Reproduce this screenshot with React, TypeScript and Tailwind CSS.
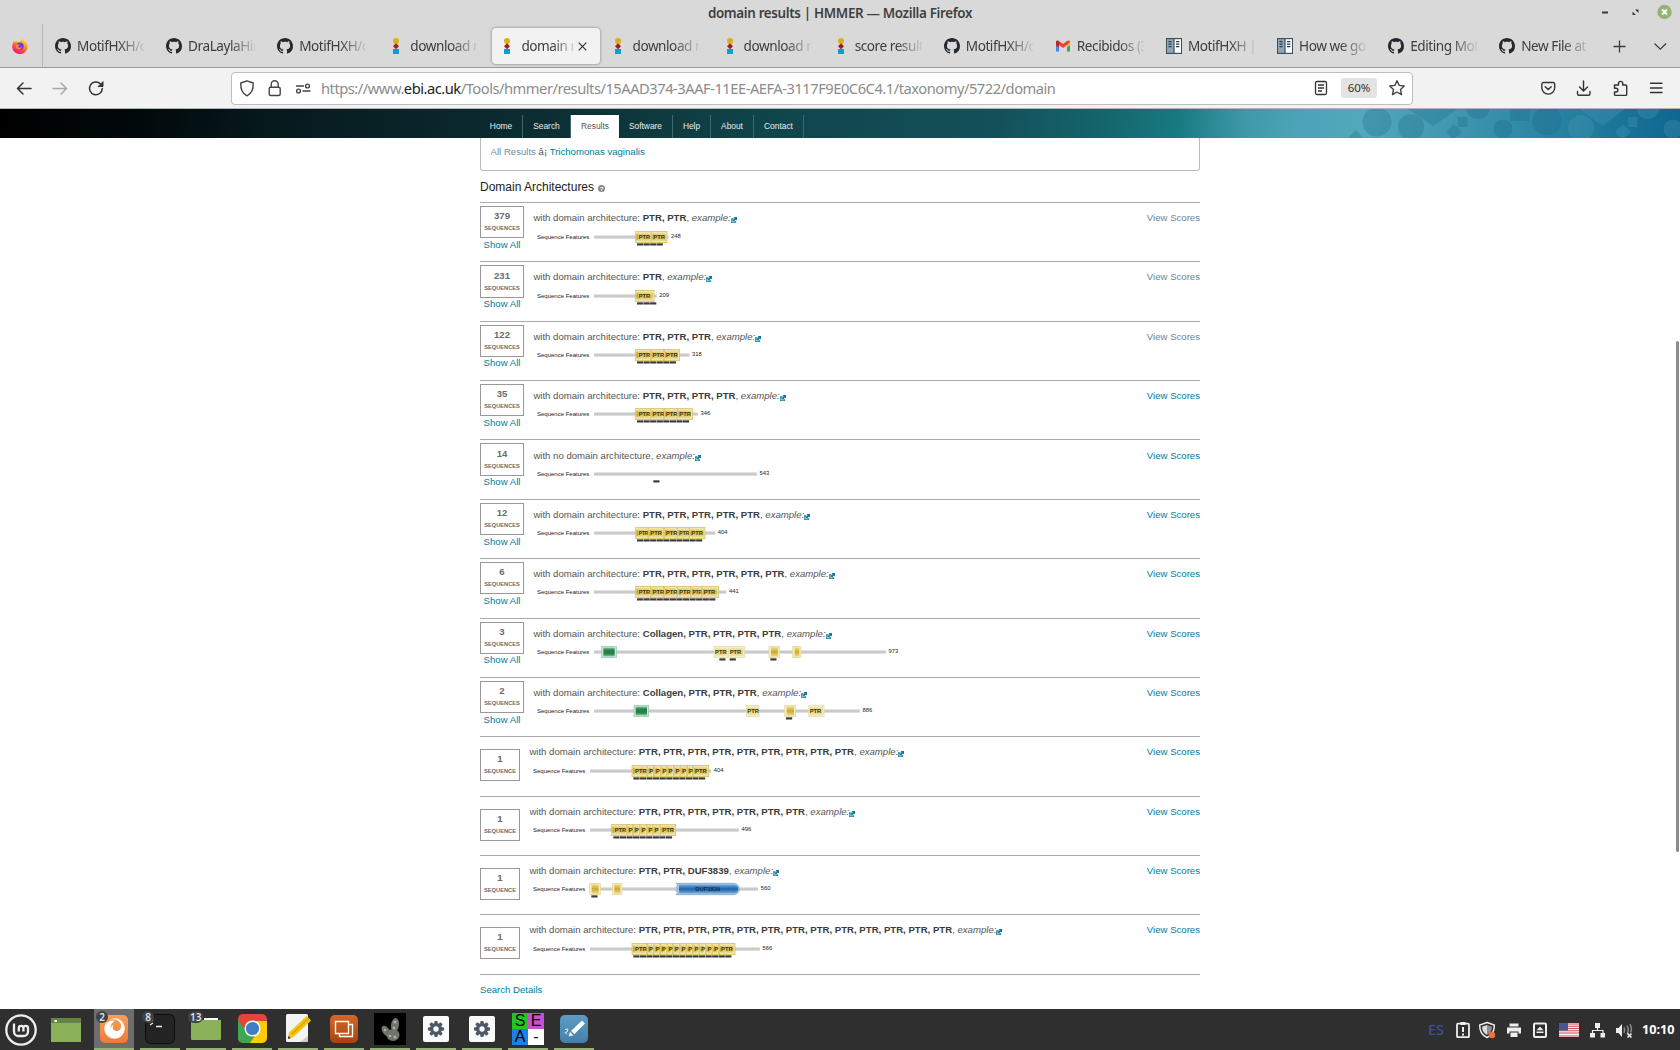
import React from "react";
import { FaFirefox } from "react-icons/fa";

const UI = "font-['Noto_Sans',sans-serif]";

/* ---------- favicons ---------- */
const GithubIcon = () => (
  <svg viewBox="0 0 16 16" className="size-4 shrink-0" fill="#24292f">
    <path d="M8 0C3.58 0 0 3.58 0 8c0 3.54 2.29 6.53 5.47 7.59.4.07.55-.17.55-.38 0-.19-.01-.82-.01-1.49-2.01.37-2.53-.49-2.69-.94-.09-.23-.48-.94-.82-1.13-.28-.15-.68-.52-.01-.53.63-.01 1.08.58 1.23.82.72 1.21 1.87.87 2.33.66.07-.52.28-.87.51-1.07-1.78-.2-3.64-.89-3.64-3.95 0-.87.31-1.59.82-2.15-.08-.2-.36-1.02.08-2.12 0 0 .67-.21 2.2.82.64-.18 1.32-.27 2-.27.68 0 1.36.09 2 .27 1.53-1.04 2.2-.82 2.2-.82.44 1.1.16 1.92.08 2.12.51.56.82 1.27.82 2.15 0 3.07-1.87 3.75-3.65 3.95.29.25.54.73.54 1.48 0 1.07-.01 1.93-.01 2.2 0 .21.15.46.55.38A8.013 8.013 0 0016 8c0-4.42-3.58-8-8-8z" />
  </svg>
);
const HmmerIcon = () => (
  <svg viewBox="0 0 16 16" className="size-4 shrink-0">
    <circle cx="8" cy="3" r="3" fill="#d2b414" />
    <path d="M8 5.2 11 8.2 8 11.2 5 8.2z" fill="#a51c1c" />
    <rect x="5" y="11" width="6" height="5" fill="#0f9dcb" />
  </svg>
);
const GmailIcon = () => (
  <svg viewBox="0 0 16 16" className="size-4 shrink-0">
    <path d="M1 4v9.5h3V6z" fill="#4285f4" />
    <path d="M15 4v9.5h-3V6z" fill="#34a853" />
    <path d="M12 3.5 15 3v4.2l-3 2.1z" fill="#fbbc04" />
    <path d="M1 7.2V4.1C1 2.4 2.8 2 4 3l4 3.1L12 3c1.3-1 3-.5 3 1.1L12 7 8 10 4 7v2.3z" fill="#ea4335" />
    <path d="M1 7.2V4.1C1 3 2 2.5 3 2.7L4 4v5.3z" fill="#c5221f" />
  </svg>
);
const BookIcon = () => (
  <svg viewBox="0 0 16 16" className="size-4 shrink-0">
    <rect width="16" height="16" fill="#3e4f5c" />
    <rect x="1" y="1.2" width="6.4" height="13.6" fill="#8ea6b8" />
    <rect x="8.6" y="1.2" width="6.4" height="13.6" fill="#fff" />
    <path d="M2.500 3.700h3M2.500 6.200h3M2.500 8.700h3M10 3.700h3.400M10 6.200h3.400M10 8.700h3.400" stroke="#2b3b47" strokeWidth="1.2" />
  </svg>
);
const FirefoxIcon = () => (
  <svg viewBox="0 0 16 16" className="size-4">
    <defs>
      <linearGradient id="fx" x1="0.8" y1="0" x2="0.3" y2="1">
        <stop offset="0" stopColor="#fff04a" />
        <stop offset=".4" stopColor="#ff9a22" />
        <stop offset=".75" stopColor="#ff3b48" />
        <stop offset="1" stopColor="#e21a7e" />
      </linearGradient>
    </defs>
    <path d="M10 0c.6 1.5 2 2.3 3 3.3.4.5.7 1 .8 1.4.2 0 .5-.2.5-.5 1 1.400 1.500 3 1.500 4.300A7.800 7.500 0 0 1 .2 8.700C.2 6.500.9 4.500 2.300 2.800l.5 1.600L4.300 3l1 1.600C7 4 9 3.500 10 0z" fill="url(#fx)" />
    <circle cx="8" cy="8.300" r="3.700" fill="#6a3fdc" />
    <path d="M4 6.500c1.500-.8 2.500.3 4 .2-.5 1.300-1.600 1-1.900 2 .3 1 2.300 1.400 3.800.3-.5 2-2.400 3-4 2.400C4 10.700 3.400 8.500 4 6.500z" fill="#ff8a2a" />
  </svg>
);

const icons = { gh: GithubIcon, hm: HmmerIcon, gm: GmailIcon, bk: BookIcon };
const tabs: { icon: keyof typeof icons; text: string; active?: boolean }[] = [
  { icon: "gh", text: "MotifHXH/c" },
  { icon: "gh", text: "DraLaylaHir" },
  { icon: "gh", text: "MotifHXH/c" },
  { icon: "hm", text: "download r" },
  { icon: "hm", text: "domain r", active: true },
  { icon: "hm", text: "download r" },
  { icon: "hm", text: "download r" },
  { icon: "hm", text: "score result" },
  { icon: "gh", text: "MotifHXH/c" },
  { icon: "gm", text: "Recibidos (3" },
  { icon: "bk", text: "MotifHXH |" },
  { icon: "bk", text: "How we got" },
  { icon: "gh", text: "Editing Mot" },
  { icon: "gh", text: "New File at" },
];

function TitleBar() {
  return (
    <div className="relative flex h-6 items-center justify-center bg-[#d9d9d9]">
      <div className="pt-[2px] text-[13.4px] font-semibold leading-6 tracking-[-0.34px] text-[#3f3f3f]">domain results | HMMER — Mozilla Firefox</div>
      <svg className="absolute right-0 top-0" width="90" height="24">
        <path d="M12 12.500h6" stroke="#3a3a3a" strokeWidth="2" />
        <path d="M45 9.500h3.500V13zM42.500 11.500V15H46z" fill="#3a3a3a" />
        <circle cx="74.500" cy="12" r="7.200" fill="#92b372" />
        <path d="M72 9.500l5 5M77 9.500l-5 5" stroke="#fff" strokeWidth="2" />
      </svg>
    </div>
  );
}

function TabStrip() {
  return (
    <div className="flex h-[44px] border-b border-[#9a9a9a] bg-[#d9d9d9]">
      <div className="flex w-[43px] shrink-0 items-center border-r border-[#b4b4b4] pl-3 pt-px">
        <FirefoxIcon />
      </div>
      <div className="flex w-[1560px] shrink-0 pl-[4px]">
        {tabs.map((t, i) => {
          const Icon = icons[t.icon];
          return (
            <div key={i} className="flex w-[111.1px] shrink-0 items-start pl-[1px] pr-[2px] pt-[4px]">
              <div
                className={
                  t.active
                    ? "flex h-[36px] w-full items-center rounded bg-[#f2f2f2] pl-[7px] shadow-[0_0_3px_rgba(0,0,0,0.45)]"
                    : "flex h-[36px] w-full items-center pl-[7px]"
                }
              >
                <Icon />
                <div
                  className={
                    t.active
                      ? "ml-[6px] w-[52px] whitespace-nowrap text-[13.6px] leading-5 tracking-[-0.45px] text-[#3d3d3d] [mask-image:linear-gradient(to_right,#000_60%,transparent_110%)]"
                      : "ml-[6px] w-[67px] whitespace-nowrap text-[13.6px] leading-5 tracking-[-0.45px] text-[#3d3d3d] [mask-image:linear-gradient(to_right,#000_62%,transparent_104%)]"
                  }
                >
                  {t.text}
                </div>
                {t.active && (
                  <svg width="9" height="9" viewBox="0 0 9 9" className="ml-[5px]">
                    <path d="M.7.7l7.600 7.600M8.300.7L.7 8.300" stroke="#333" strokeWidth="1.200" />
                  </svg>
                )}
              </div>
            </div>
          );
        })}
      </div>
      <svg width="77" height="43" viewBox="1603 24 77 43" fill="none" stroke="#3d3d3d" strokeWidth="1.300">
        <path d="M1613.500 46.500h12M1619.500 40.500v12M1654.500 43.500l5.800 5.600 5.800-5.600" />
      </svg>
    </div>
  );
}

function NavBar() {
  return (
    <div className="flex h-[41px] items-center border-b border-[#b5b5b5] bg-[#f2f2f2]">
      <svg width="231" height="40" viewBox="0 68 231 40" fill="none" stroke="#333" strokeWidth="1.500" strokeLinecap="round" strokeLinejoin="round" className="shrink-0">
        <path d="M31 88.500H17.500M23 83l-5.500 5.500L23 94" />
        <path d="M53 88.500h13.500M61 83l5.500 5.500L61 94" stroke="#a8a8a8" />
        <path d="M102.300 88.500a6.400 6.400 0 1 1-1.900-4.700" />
        <path d="M103 82v4.500h-4.500z" fill="#333" strokeWidth="1" />
      </svg>
      <div className="flex h-[33px] w-[1182px] shrink-0 items-center rounded border border-[#bdbdbd] bg-white">
        <svg width="89" height="30" viewBox="232 73 89 30" fill="none" stroke="#444" strokeWidth="1.400" strokeLinejoin="round" strokeLinecap="round" className="shrink-0">
          <path d="M247 80.800l6.200 2.200c.3 5.500-1.500 10.500-6.200 12.800-4.700-2.300-6.500-7.300-6.200-12.800z" />
          <rect x="269.200" y="87.300" width="11" height="8.200" rx="1.500" />
          <path d="M271.200 87v-2.800a3.500 3.500 0 0 1 7 0V87" />
          <path d="M296.500 86h7M303 91h7" />
          <circle cx="307.500" cy="86" r="1.900" />
          <circle cx="298.500" cy="91" r="1.900" />
        </svg>
        <div className="w-[993px] shrink-0 whitespace-nowrap text-[14.700px] leading-6 tracking-[-0.48px] text-[#8c8c8c]">
          https://www.<span className="text-[#222]">ebi.ac.uk</span>/Tools/hmmer/results/15AAD374-3AAF-11EE-AEFA-3117F9E0C6C4.1/taxonomy/5722/domain
        </div>
        <svg width="14" height="16" viewBox="0 0 14 16" fill="none" stroke="#333" strokeWidth="1.300" className="shrink-0">
          <rect x="1.500" y="1.500" width="11" height="13" rx="1.500" />
          <path d="M4 5h6M4 8h6M4 11h4" />
        </svg>
        <div className="ml-[13px] flex h-[20px] w-[36px] items-center justify-center rounded-[3px] bg-[#e3e3e3] text-[11.500px] text-[#333]">60%</div>
        <svg width="18" height="18" viewBox="0 0 18 18" fill="none" stroke="#444" strokeWidth="1.400" strokeLinejoin="round" className="ml-[11px]">
          <path d="M9 1.700l2.200 4.700 5.100.6-3.800 3.500 1 5.100L9 13l-4.500 2.600 1-5.100L1.700 7l5.100-.6z" />
        </svg>
      </div>
      <svg width="267" height="40" viewBox="1413 68 267 40" fill="none" stroke="#333" strokeWidth="1.400" strokeLinejoin="round" strokeLinecap="round">
        <path d="M1543.500 82.500h9.500a1.700 1.700 0 0 1 1.700 1.700v3.500a6.400 6.400 0 0 1-12.900 0v-3.500a1.700 1.700 0 0 1 1.700-1.700zM1545.200 86.700l3 2.800 3-2.800" />
        <path d="M1583.500 81v9.500M1579.500 87l4 4 4-4M1577.500 91.500v2.200a1.500 1.500 0 0 0 1.500 1.500h9.500a1.500 1.500 0 0 0 1.500-1.500v-2.200" />
        <path d="M1614.500 85h4v-1.500a2.100 2.100 0 0 1 4.200 0V85h3a1 1 0 0 1 1 1v8.400a1 1 0 0 1-1 1h-10.200a1 1 0 0 1-1-1V92h1.500a1.900 1.900 0 0 0 0-3.800h-1.500z" />
        <path d="M1650.500 83.300h11.500M1650.500 88h11.500M1650.500 92.500h11.500" />
      </svg>
    </div>
  );
}

/* ---------- site header ---------- */
const navItems = [
  { t: "Home", w: "w-[43px]" },
  { t: "Search", w: "w-[48px]" },
  { t: "Results", w: "w-[48px]", active: true },
  { t: "Software", w: "w-[54px]" },
  { t: "Help", w: "w-[38px]" },
  { t: "About", w: "w-[43px]" },
  { t: "Contact", w: "w-[50px]" },
];

function SiteHeader() {
  return (
    <div className="relative h-[29px] bg-[linear-gradient(97deg,#000_0%,#020a0c_9%,#06191d_16%,#0c2d32_32%,#10444a_45%,#135059_59%,#15666d_66%,#177a80_70%,#3d98a8_74%,#4ca3b7_77%,#52a8bb_81%,#4198b0_86%,#2681a1_93%,#0d6690_100%)]">
      <svg className="absolute right-0 top-0" width="340" height="29" viewBox="1340 109 340 29" fill="#1b6283" fillOpacity=".27">
        <circle cx="1377" cy="122" r="14.500" />
        <circle cx="1411" cy="127" r="13" />
        <path d="M1408 109h50l-25 17zM1446 132l8-8 8 8-7 6h-3zM1348 138l8-8 7 8z" />
        <rect x="1458" y="117" width="9.500" height="10" />
        <circle cx="1478" cy="107" r="12" />
        <rect x="1510" y="107" width="19" height="14" />
        <circle cx="1503" cy="129" r="9.500" />
        <circle cx="1547" cy="121" r="14.500" />
      </svg>
      <svg className="absolute right-0 top-0" width="140" height="29" viewBox="1540 109 140 29" fill="#4b9ab4" fillOpacity=".3">
        <circle cx="1581" cy="128" r="13" />
        <path d="M1580 109h45l-23 17zM1615 132l8-8 8 8-7 6h-3z" />
        <rect x="1628" y="117" width="9.500" height="10" />
        <circle cx="1648" cy="107" r="12" />
        <circle cx="1673" cy="129" r="9.500" />
      </svg>
      <div className="relative flex h-full pl-[480px] pt-[6px] text-[8.400px] leading-[22px]">
        {navItems.map((n) =>
          n.active ? (
            <div key={n.t} className={`${n.w} h-[23px] bg-white text-center text-[#555]`}>{n.t}</div>
          ) : (
            <div key={n.t} className={`${n.w} h-[23px] border-r border-[#41686d] text-center text-[#e8eeee]`}>{n.t}</div>
          ),
        )}
      </div>
    </div>
  );
}

/* ---------- domain graphics; coordinates are thirds of a pixel from the start of the sequence bar ---------- */
type Kind = "ptr" | "lite" | "gold" | "green" | "blue";
type Dom = [start: number, end: number, kind: Kind, label?: string];
type Row = {
  n: number;
  arch: string;
  len: number;
  doms: Dom[];
  dashes: [start: number, count: number][];
  h: string;
  visited?: boolean;
  /* vertical rounding of the scaled page, in whole pixels */
  gfx?: string;
  box?: string;
  num?: string;
  title?: string;
  all?: string;
};

/* a repeat narrower than its label only has room for the first letter */
const ptrs = (...bounds: number[]): Dom[] =>
  bounds.slice(0, -1).map((b, i) => [b, bounds[i + 1], "ptr", bounds[i + 1] - b < 25 ? "P" : "PTR"] as Dom);
const rep = (n: number) => Array(n).fill("PTR").join(", ");

const LOW = "pt-[4px]";
const TALL = "h-[33px]";

const rows: Row[] = [
  { n: 379, arch: rep(2), len: 248, doms: ptrs(124, 172, 220), dashes: [[129, 4]], h: "h-[59px]", visited: true, gfx: LOW },
  { n: 231, arch: rep(1), len: 209, doms: ptrs(124, 181), dashes: [[129, 3]], h: "h-[60px]", visited: true, gfx: LOW, box: TALL, num: "pt-[4px]", all: "-mt-px" },
  { n: 122, arch: rep(3), len: 318, doms: ptrs(124, 170, 210, 257), dashes: [[129, 6]], h: "h-[59px]", visited: true, all: "-mt-px" },
  { n: 35, arch: rep(4), len: 346, doms: ptrs(124, 170, 210, 250, 296), dashes: [[129, 8]], h: "h-[59px]" },
  { n: 14, arch: "", len: 543, doms: [], dashes: [[178, 1]], h: "h-[60px]", gfx: LOW, box: TALL, num: "pt-[4px]", title: "pt-[9px]", all: "-mt-px" },
  { n: 12, arch: rep(5), len: 404, doms: ptrs(124, 163, 210, 250, 286, 334), dashes: [[129, 10]], h: "h-[59px]" },
  { n: 6, arch: rep(6), len: 441, doms: ptrs(124, 170, 210, 250, 290, 323, 375), dashes: [[129, 12]], h: "h-[60px]" },
  { n: 3, arch: "Collagen, " + rep(4), len: 973, doms: [[22, 68, "green"], [359, 403, "lite", "PTR"], [403, 453, "lite", "PTR"], [524, 558, "gold"], [595, 622, "gold"]], dashes: [[376, 1], [407, 1], [529, 1]], h: "h-[59px]", all: "-mt-px" },
  { n: 2, arch: "Collagen, " + rep(3), len: 886, doms: [[119, 165, "green"], [456, 496, "lite", "PTR"], [571, 606, "gold"], [643, 691, "lite", "PTR"]], dashes: [[576, 1]], h: "h-[59px]" },
  { n: 1, arch: rep(9), len: 404, doms: ptrs(125, 172, 192, 212, 230, 251, 271, 291, 309, 357), dashes: [[130, 11]], h: "h-[60px]", gfx: LOW },
  { n: 1, arch: rep(7), len: 496, doms: ptrs(64, 110, 129, 149, 170, 188, 211, 258), dashes: [[70, 9]], h: "h-[59px]" },
  { n: 1, arch: "PTR, PTR, DUF3839", len: 560, doms: [[-2, 32, "gold"], [66, 97, "gold"], [258, 449, "blue", "DUF3839"]], dashes: [[4, 1]], h: "h-[59px]" },
  { n: 1, arch: rep(13), len: 566, doms: ptrs(125, 171, 191, 210, 230, 249, 269, 289, 308, 328, 347, 367, 387, 436), dashes: [[130, 15]], h: "h-[60px]", gfx: LOW },
];

function Domain({ d, first }: { d: Dom; first: boolean }) {
  const [a, b, kind, label] = d;
  const w = b - a;
  if (kind === "blue")
    return (
      <g>
        <path d={`M${a} 1H${b - 17}a16 17 0 0 1 0 34H${a}l5 -6l-5 -6l5 -5l-5 -6l5 -6z`} fill="#a3c6e6" stroke="#6d9cc8" strokeWidth="2" />
        <path d={`M${a + 9} 5H${b - 17}a13 13 0 0 1 0 26H${a + 9}z`} fill="url(#gBlue)" />
        <text x={(a + b) / 2} y="24.500" fontSize="17.500" fontWeight="bold" textAnchor="middle" fill="#16304f">{label}</text>
      </g>
    );
  if (kind === "green")
    return (
      <g>
        <rect x={a + 1} y="1" width={w - 2} height="34" fill="#cde8d6" stroke="#8cc5a2" strokeWidth="2" />
        <rect x={a + 6} y="5" width={w - 12} height="26" fill="url(#gGreen)" />
      </g>
    );
  if (kind === "gold")
    return (
      <g>
        <rect x={a + 1} y="1" width={w - 2} height="34" fill="#f6edc3" stroke="#e6d68e" strokeWidth="2" />
        <rect x={a + 7} y="4" width={w - 13} height="28" fill="url(#gGold)" />
      </g>
    );
  const lite = kind === "lite";
  const start = a + (lite ? 4 : first ? 10 : 6);
  return (
    <g>
      <rect x={a + 1} y="1" width={w - 2} height="34" fill={lite ? "#f6efcd" : "#f1e6b4"} stroke={lite ? "#e6d99c" : "#d4bb4d"} strokeWidth="2" />
      <rect x={a + 4} y="5" width={w - 9} height="26" fill={lite ? "url(#gLite)" : "url(#gPtr)"} />
      {!lite && <rect x={a + 3} y="10" width="6" height="16" fill="#cfab2a" />}
      <text
        x={start}
        y="24.500"
        fontSize="17.500"
        fontWeight="bold"
        textLength={label === "PTR" ? Math.min(35, b - start) : undefined}
        lengthAdjust="spacingAndGlyphs"
        fill="#40350f"
      >
        {label}
      </text>
    </g>
  );
}

function Graphic({ row }: { row: Row }) {
  const end = row.len * 0.9;
  return (
    <svg width="400" height="18" viewBox="-171 -6 1200 54" className="block">
      <text x="-171" y="24" fontSize="18" fill="#222" textLength="157">Sequence Features</text>
      <rect x="0" y="12.500" width={end} height="11" fill="url(#gBar)" />
      {row.doms.map((d, i) => <Domain key={i} d={d} first={i === 0} />)}
      {row.dashes.map(([s, c]) =>
        Array.from({ length: c }, (_, i) => <rect key={s + "-" + i} x={s + i * 19.700} y="37" width="18.500" height="6.500" fill="#3a3a3a" />),
      )}
      <text x={end + 8} y="22" fontSize="17.500" fill="#222">{row.len}</text>
    </svg>
  );
}

function LinkIcon() {
  return (
    <svg width="6" height="6" viewBox="0 0 7 7" className="inline-block align-[-1.5px]">
      <path d="M0 1.500h3v1L2 5h4v2H0z" fill="#2a86a3" />
      <path d="M3 0h4v4L5.800 3 3.500 5.200 2 3.700 4.200 1.400z" fill="#0a7796" />
      <path d="M1.300 2.800v2.900h2.900" stroke="#d5e8ee" strokeWidth=".8" fill="none" />
    </svg>
  );
}

function ResultRow({ row }: { row: Row }) {
  const one = row.n === 1;
  const top = row.title ?? "pt-[8px]";
  return (
    <div className={`${row.h} flex items-start overflow-hidden border-t border-[#aaa]`}>
      <div className={one ? "w-[40px] shrink-0 pt-[12px]" : "w-[44px] shrink-0 pt-[3px]"}>
        <div className={`${row.box ?? "h-[32px]"} ${row.num ?? "pt-[3px]"} flex flex-col items-center border border-[#999] font-bold text-[#6b6b6b]`}>
          <div className="text-[9.600px] leading-[12px]">{row.n}</div>
          <div className="pt-[2px] text-[5.700px] leading-[8px]">{one ? "SEQUENCE" : "SEQUENCES"}</div>
        </div>
        {!one && <div className={`${row.all ?? ""} whitespace-nowrap text-center leading-[13px] text-[#007c9e]`}>Show All</div>}
      </div>
      <div className="min-w-0 flex-1">
        <div className={`${top} h-[22px] whitespace-nowrap pl-[9.4px] leading-[14px]`}>
          {row.arch ? (
            <>with domain architecture: <b className="text-[#3c3c3c]">{row.arch}</b>, </>
          ) : (
            <>with no domain architecture, </>
          )}
          <i>example:</i>
          <LinkIcon />
        </div>
        <div className={`${row.gfx ?? "pt-[3px]"} pl-[13px]`}>
          <Graphic row={row} />
        </div>
      </div>
      <div className={row.visited ? `${top} leading-[14px] text-[#6b8495]` : `${top} leading-[14px] text-[#007c9e]`}>View Scores</div>
    </div>
  );
}

function Results() {
  return (
    <div className="ml-[480px] w-[720px] text-[9.600px] text-[#555]">
      <svg width="0" height="0" className="absolute">
        <defs>
          <linearGradient id="gBar" x2="0" y2="1"><stop offset="0" stopColor="#e3e3e3" /><stop offset=".5" stopColor="#c2c2c2" /><stop offset="1" stopColor="#dedede" /></linearGradient>
          <linearGradient id="gPtr" x2="0" y2="1"><stop offset="0" stopColor="#eee0a2" /><stop offset=".5" stopColor="#d6ba4b" /><stop offset="1" stopColor="#eee0a2" /></linearGradient>
          <linearGradient id="gLite" x2="0" y2="1"><stop offset="0" stopColor="#f1e7b5" /><stop offset=".5" stopColor="#e4cf7a" /><stop offset="1" stopColor="#f1e7b5" /></linearGradient>
          <linearGradient id="gGold" x2="0" y2="1"><stop offset="0" stopColor="#ecdc93" /><stop offset=".5" stopColor="#ccaa28" /><stop offset="1" stopColor="#ecdc93" /></linearGradient>
          <linearGradient id="gGreen" x2="0" y2="1"><stop offset="0" stopColor="#7fc095" /><stop offset=".3" stopColor="#23834a" /><stop offset=".7" stopColor="#23834a" /><stop offset="1" stopColor="#7fc095" /></linearGradient>
          <linearGradient id="gBlue" x2="0" y2="1"><stop offset="0" stopColor="#6fa5d6" /><stop offset=".5" stopColor="#1f64a8" /><stop offset="1" stopColor="#6fa5d6" /></linearGradient>
        </defs>
      </svg>
      <div className="h-[33px] rounded-b-[3px] border border-t-0 border-[#bbb] pl-[9.600px] pt-[7px] leading-[14px]">
        <span className="text-[#6f8fa6]">All Results</span> â¡ <span className="text-[#007c9e]">Trichomonas vaginalis</span>
      </div>
      <div className="flex h-[31px] items-center pt-[1px] text-[12px] text-[#222]">
        Domain Architectures
        <div className="ml-[4px] mt-[3px] flex size-[7px] items-center justify-center rounded-full bg-[#888] text-[6px] font-bold leading-none text-white">?</div>
      </div>
      {rows.map((r, i) => <ResultRow key={i} row={r} />)}
      <div className="border-t border-[#aaa] pt-[7px] leading-[15px] text-[#007c9e]">Search Details</div>
    </div>
  );
}

/* ---------- taskbar ---------- */
const Gear = () => (
  <svg width="26" height="26" viewBox="0 0 26 26">
    <rect width="26" height="26" rx="2" fill="#fafafa" />
    <g fill="#4c5866">
      <circle cx="13" cy="13" r="6" />
      {[0, 45, 90, 135].map((a) => <rect key={a} x="11.300" y="5" width="3.400" height="16" rx="1" transform={`rotate(${a} 13 13)`} />)}
    </g>
    <circle cx="13" cy="13" r="2.700" fill="#fafafa" />
  </svg>
);

const tasks: { icon: React.ReactNode; badge?: string; active?: boolean }[] = [
  {
    badge: "2",
    active: true,
    icon: (
      <div className="flex size-[28px] items-center justify-center rounded-[5px] bg-linear-to-b from-[#f9a05a] to-[#ee7a35]">
        <FaFirefox size={21} color="#fff" />
      </div>
    ),
  },
  {
    badge: "8",
    icon: (
      <svg width="30" height="30">
        <rect x=".5" y=".5" width="29" height="29" rx="5" fill="#232323" stroke="#0c0c0c" />
        <path d="M5 8l3-2M5 11l3-2M11 12.500h6" stroke="#eee" strokeWidth="1.300" />
      </svg>
    ),
  },
  {
    badge: "13",
    icon: (
      <svg width="30" height="24">
        <path d="M13 1h14v4H13z" fill="#fff" />
        <path d="M0 3h30v19a1 1 0 0 1-1 1H1a1 1 0 0 1-1-1z" fill="#8bb158" />
      </svg>
    ),
  },
  {
    icon: (
      <svg width="29" height="29" viewBox="0 0 29 29">
        <clipPath id="cr"><rect width="29" height="29" rx="5" /></clipPath>
        <g clipPath="url(#cr)">
          <rect width="29" height="29" fill="#e2463a" />
          <path d="M0 6l9 12 7 5-4 6H0z" fill="#3fa652" />
          <path d="M14 7h15v22H12l9-13z" fill="#fccb0a" />
        </g>
        <circle cx="14.500" cy="14.500" r="8" fill="#fff" />
        <circle cx="14.500" cy="14.500" r="6.600" fill="#3e7fc4" />
      </svg>
    ),
  },
  {
    icon: (
      <svg width="26" height="29" viewBox="0 0 26 29">
        <rect x="1" width="22" height="28" rx="1.500" fill="#f4f4f2" />
        <path d="M15 28l8-6v5l-1 1z" fill="#ccc" />
        <path d="M4 18.500L21.500 2l4.500 4.500L8.500 23l-5.500 1.500z" fill="#f6c514" />
        <path d="M6.500 20.500L24 4" stroke="#dca30c" strokeWidth="1.500" />
        <path d="M3.500 22l2.300 2.200-3 .5z" fill="#222" />
      </svg>
    ),
  },
  {
    icon: (
      <svg width="28" height="28" viewBox="0 0 28 28">
        <defs><linearGradient id="vm" x2="0" y2="1"><stop stopColor="#d4682a" /><stop offset="1" stopColor="#a8430f" /></linearGradient></defs>
        <rect width="28" height="28" rx="5" fill="url(#vm)" />
        <path d="M5.500 6.500h13v12h-13zM19 9.500h3.500v12H9.500V19" fill="none" stroke="#fff" strokeWidth="1.400" />
      </svg>
    ),
  },
  {
    icon: (
      <svg width="32" height="32" viewBox="0 0 32 32">
        <rect width="32" height="32" fill="#000" />
        <g fill="#6f746d">
          <ellipse cx="21" cy="12" rx="4" ry="7" transform="rotate(8 21 12)" />
          <ellipse cx="12" cy="18" rx="3.500" ry="6" transform="rotate(-35 12 18)" />
          <ellipse cx="19" cy="22" rx="6.500" ry="6" />
        </g>
        <g fill="#a9b5a4">
          <circle cx="21" cy="9" r="1.500" /><circle cx="20" cy="15" r="1.400" /><circle cx="11" cy="17" r="1.300" /><circle cx="16" cy="23" r="1.300" /><circle cx="21" cy="24" r="1.500" />
        </g>
      </svg>
    ),
  },
  { icon: <Gear /> },
  { icon: <Gear /> },
  {
    icon: (
      <div className="grid size-[32px] grid-cols-2 grid-rows-2 text-center font-['Liberation_Sans',sans-serif] text-[16px] leading-[16px] text-black">
        <div className="bg-[#1fc71f]">S</div>
        <div className="bg-[#c94fd0]">E</div>
        <div className="bg-[#1f7fe8]">A</div>
        <div className="bg-white">-</div>
      </div>
    ),
  },
  {
    icon: (
      <svg width="28" height="28" viewBox="0 0 28 28">
        <defs><linearGradient id="xe" x2="0" y2="1"><stop stopColor="#5d9cc6" /><stop offset="1" stopColor="#447fa8" /></linearGradient></defs>
        <rect width="28" height="28" rx="5" fill="url(#xe)" />
        <path d="M11 16L22 5.500l3 3L14.500 19z" fill="#fff" />
        <path d="M10 17l3.500 3.200-5 1.300z" fill="#fff" />
        <path d="M5 14.500l3-.5-1 3-2 .5 2 2" stroke="#dfeaf2" fill="none" />
      </svg>
    ),
  },
];

function Taskbar() {
  return (
    <div className="flex h-[41px] shrink-0 bg-[#2f2f2f]">
      <div className="flex w-[94px] shrink-0 items-center">
        <svg width="94" height="41" viewBox="0 1009 94 41">
          <circle cx="21" cy="1030" r="14.700" fill="none" stroke="#eee" strokeWidth="2.300" />
          <path d="M14 1023.500v8a4.500 4.500 0 0 0 4.500 4.500h5a4.500 4.500 0 0 0 4.500-4.500v-3.300a2.300 2.300 0 0 0-4.600 0v3.300M23.400 1031.500v-3.300a2.300 2.300 0 0 0-4.600 0v3.300" fill="none" stroke="#eee" strokeWidth="2.300" />
          <rect x="51" y="1018" width="30" height="24" fill="#8bb158" />
          <rect x="51" y="1018" width="30" height="5" fill="#648542" />
          <rect x="54.500" y="1020" width="2.500" height="2" fill="#fff" />
        </svg>
      </div>
      <div className="flex gap-[6px]">
        {tasks.map((t, i) => (
          <div key={i} className={t.active ? "relative flex h-[41px] w-[40px] items-center justify-center border-b-2 border-[#92b372] bg-[#6e6e6e]" : "relative flex h-[41px] w-[40px] items-center justify-center border-b-2 border-[#92b372]"}>
            {t.icon}
            {t.badge && (
              <div className="absolute left-[2px] top-[2px] flex h-[12px] min-w-[12px] items-center justify-center rounded-full bg-[#3f4244] px-[2px] text-[10px] font-semibold leading-none text-[#dbe6ee]">
                {t.badge}
              </div>
            )}
          </div>
        ))}
      </div>
      <div className="ml-auto flex items-center">
        <div className="w-[24px] pt-[1px] text-[14.500px] font-medium text-[#3f4f9c]">ES</div>
        <svg width="190" height="41" viewBox="1452 1009 190 41">
          <rect x="1457" y="1023.700" width="12" height="13.500" rx="1" fill="none" stroke="#eee" strokeWidth="1.800" />
          <path d="M1460.500 1022h5v3h-5z" fill="#eee" />
          <path d="M1463 1027v5M1463 1033.500v2" stroke="#eee" strokeWidth="2" />
          <path d="M1487 1022.500l7.300 2.500c.2 5.500-1.800 10-7.300 12.500-5.500-2.500-7.500-7-7.300-12.500z" fill="none" stroke="#eee" strokeWidth="1.500" />
          <path d="M1487 1025v10c-3.600-2-4.900-5-5-8.300z" fill="#ddd" />
          <path d="M1487 1025v10c3.600-2 4.900-5 5-8.300z" fill="#8e8e8e" />
          <circle cx="1492" cy="1035" r="3.200" fill="#f2713a" />
          <path d="M1509.500 1023.500h9v3h-9zM1507 1027.500h14v6h-2.500v-2h-9v2h-2.500zM1510.500 1032.500h7v4.500h-7z" fill="#eee" />
          <rect x="1534" y="1023.500" width="12" height="13.500" rx="1" fill="none" stroke="#eee" strokeWidth="2" />
          <path d="M1540 1026.500l3.500 3.800h-7zM1536.500 1031.500h7v1.500h-7z" fill="#eee" />
          <rect x="1559" y="1023" width="20" height="14" fill="#f3f3f3" />
          <path d="M1559 1024h20M1559 1026.300h20M1559 1028.500h20M1559 1030.700h20M1559 1033h20M1559 1036h20" stroke="#d2525c" strokeWidth="1.100" />
          <rect x="1559" y="1023" width="9" height="7.500" fill="#4a5590" />
          <path d="M1595 1023h5v5h-5zM1590 1033h5v4.500h-5zM1600.500 1033h4.500v4.500h-4.500z" fill="#eee" />
          <path d="M1597.500 1028v3M1592.500 1034v-3.500h10.500v3.500" fill="none" stroke="#eee" strokeWidth="1.200" />
          <path d="M1616 1028h2.500l3.500-4v13l-3.500-4h-2.500z" fill="#eee" />
          <path d="M1624 1027.500q1.500 2.500 0 5.500M1627 1025.500q2.500 4.500 0 9M1630 1024q2.500 5 .5 8.500" fill="none" stroke="#8a8a8a" strokeWidth="1.500" />
          <path d="M1627.500 1033.500l4 4M1631.500 1033.500l-4 4" stroke="#eee" strokeWidth="1.600" />
        </svg>
        <div className="w-[38px] pt-px text-[12.700px] font-bold text-white">10:10</div>
      </div>
    </div>
  );
}

export default function App() {
  return (
    <div className={`${UI} flex h-[1050px] w-[1680px] flex-col overflow-hidden bg-white`}>
      <TitleBar />
      <TabStrip />
      <NavBar />
      <div className="relative min-h-0 flex-1 overflow-hidden bg-white font-['Liberation_Sans',Arial,sans-serif]">
        <SiteHeader />
        <Results />
        <div className="absolute right-[1px] top-[232px] h-[511px] w-[3px] rounded-full bg-[#8c8c8c]" />
      </div>
      <Taskbar />
    </div>
  );
}
